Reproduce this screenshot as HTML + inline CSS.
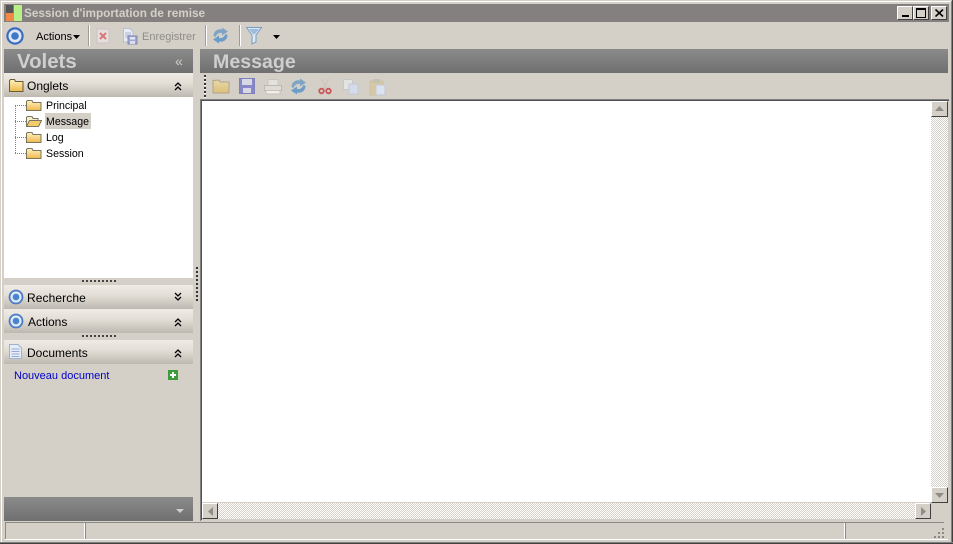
<!DOCTYPE html>
<html><head><meta charset="utf-8">
<style>
html,body{margin:0;padding:0;background:#d4d0c8}
#w{position:relative;width:953px;height:544px;overflow:hidden;background:#d4d0c8;font-family:"Liberation Sans",sans-serif;font-size:11px;color:#000}
#w div,#w svg{position:absolute}
#w span{position:absolute;white-space:nowrap}
.ic{filter:blur(.3px)}
.hd{background:linear-gradient(#8b8b8b,#6f6f6f)}
.sec{left:4px;width:189px;height:24px;background:linear-gradient(#efebe5 0,#e4e0d8 40%,#bdb9b0 100%)}
.sec span{font-size:12px;top:5px}
.btn{background:#d4d0c8;border:1px solid;border-color:#fff #404040 #404040 #fff;box-sizing:border-box}
.h1{font-weight:bold;font-size:20px;color:#cfcfcf}
.tr{font-size:10.6px}
</style></head><body>
<div id="w">
<svg width="0" height="0" style="left:0;top:0"><defs>
<linearGradient id="fo" x1="0" y1="0" x2="0" y2="1"><stop offset="0" stop-color="#fff4c0"/><stop offset="1" stop-color="#eeb84c"/></linearGradient>
<linearGradient id="fp" x1="0" y1="0" x2="0" y2="1"><stop offset="0" stop-color="#e8d8a8"/><stop offset="1" stop-color="#dcc07c"/></linearGradient>
</defs></svg>
<!-- window frame -->
<div style="left:0;top:0;width:953px;height:1px;background:#d4d0c8"></div>
<div style="left:1px;top:1px;width:951px;height:1px;background:#fff"></div>
<div style="left:1px;top:1px;width:1px;height:541px;background:#fff"></div>
<div style="left:951px;top:1px;width:1px;height:542px;background:#808080"></div>
<div style="left:952px;top:0;width:1px;height:544px;background:#404040"></div>
<div style="left:0;top:542px;width:953px;height:1px;background:#808080"></div>
<div style="left:0;top:543px;width:953px;height:1px;background:#404040"></div>

<!-- title bar -->
<div style="left:4px;top:4px;width:945px;height:18px;background:#84807f"></div>
<div style="left:6px;top:5px;width:7px;height:8px;background:#555"></div>
<div style="left:6px;top:13px;width:8px;height:8px;background:#f08848"></div>
<div style="left:14px;top:5px;width:8px;height:16px;background:#b8f088"></div>
<span style="left:24px;top:7px;font-weight:bold;font-size:11.75px;color:#d4d0c8">Session d'importation de remise</span>
<div class="btn" style="left:897px;top:6px;width:16px;height:14px"><div style="left:4px;top:8px;width:7px;height:2px;background:#000"></div></div>
<div class="btn" style="left:913px;top:6px;width:16px;height:14px"><div style="left:2px;top:1px;width:10px;height:10px;border:1px solid #000;border-top-width:2px;box-sizing:border-box"></div></div>
<div class="btn" style="left:931px;top:6px;width:16px;height:14px"><svg style="left:3px;top:2px" width="9" height="8"><path d="M0.5 0.5L8 7.5M8 .5L0.5 7.5" stroke="#000" stroke-width="1.6"/></svg></div>

<!-- main toolbar -->
<svg class="ic" style="left:6px;top:27px" width="18" height="18"><circle cx="9" cy="9" r="7.600" fill="#dfe8f5" stroke="#3c6cc0" stroke-width="2.200"/><circle cx="9" cy="9" r="3.800" fill="#3f78c8"/></svg>
<span style="left:36px;top:31px;font-size:11px">Actions</span>
<svg style="left:73px;top:35px" width="7" height="4"><path d="M0 0H7L3.5 4Z" fill="#000"/></svg>
<div style="left:88px;top:25px;width:1px;height:21px;background:#a09c94"></div><div style="left:89px;top:25px;width:1px;height:21px;background:#fff"></div>
<svg class="ic" style="left:96px;top:28px" width="14" height="16"><rect x="1" y="1" width="12" height="14" fill="#e8dede" stroke="#c8c4c4"/><path d="M4 5L10 11M10 5L4 11" stroke="#d87878" stroke-width="2"/></svg>
<svg class="ic" style="left:122px;top:28px" width="17" height="17"><path d="M1.500 .5H8L11 3.500V14H1.500Z" fill="#e8ecf4" stroke="#b8c0cc"/><path d="M3 5H9M3 7H9M3 9H6" stroke="#a8b8d0"/><rect x="6" y="8" width="9" height="8" fill="#a0a8d0" stroke="#8088b8"/><rect x="8" y="9" width="5" height="2.500" fill="#e4e4ec"/><rect x="8" y="13" width="5" height="3" fill="#dcdce8"/></svg>
<span style="left:142px;top:31px;font-size:11px;color:#8f8d88">Enregistrer</span>
<div style="left:205px;top:25px;width:1px;height:21px;background:#a09c94"></div><div style="left:206px;top:25px;width:1px;height:21px;background:#fff"></div>
<svg class="ic" style="left:212px;top:27px" width="17" height="17"><path d="M1.500 9C1.500 4 6 1.500 10 2.500L10 .5L16 4.500L10 8.500V6C7 5.500 5 6.500 3.500 10Z" fill="#7fa4c4"/><path d="M15.500 8C15.500 13 11 15.500 7 14.500V16.500L1 12.500L7 8.500V11C10 11.500 12 10.500 13.500 7Z" fill="#6c9cc8"/></svg>
<div style="left:239px;top:25px;width:1px;height:21px;background:#a09c94"></div><div style="left:240px;top:25px;width:1px;height:21px;background:#fff"></div>
<svg class="ic" style="left:246px;top:27px" width="17" height="18"><path d="M.5 .5H15.500L10 8V15L6 17V8Z" fill="#dce8f4" stroke="#7a9cc0"/><path d="M3 2H13L9 7H7Z" fill="#9cbcdc"/></svg>
<svg style="left:273px;top:35px" width="7" height="4"><path d="M0 0H7L3.500 4Z" fill="#000"/></svg>

<!-- Volets header -->
<div class="hd" style="left:4px;top:49px;width:189px;height:24px"></div>
<span class="h1" style="left:17px;top:51px;font-size:20.4px">Volets</span>
<span style="left:175px;top:53px;font-size:14px;color:#d4d0c8">«</span>

<!-- Onglets -->
<div class="sec" style="top:73px"><span style="left:23px;top:6px">Onglets</span>
<svg class="ic" style="left:5px;top:5px" width="15" height="14"><path d="M.5 2.500V13.500H14V3.500H6.500L5.500 1.500H1.500Z" fill="url(#fo)" stroke="#6a5a38"/></svg>
<svg style="left:170px;top:9px" width="8" height="9"><path d="M1 4L4 1L7 4M1 8L4 5L7 8" fill="none" stroke="#000" stroke-width="1.300"/></svg>
</div>

<!-- tree -->
<div style="left:4px;top:97px;width:189px;height:181px;background:#fff"></div>
<div style="left:15px;top:105px;width:0;height:48px;border-left:1px dotted #808080"></div>
<div style="left:15px;top:105px;width:11px;height:0;border-top:1px dotted #808080"></div>
<div style="left:15px;top:121px;width:11px;height:0;border-top:1px dotted #808080"></div>
<div style="left:15px;top:137px;width:11px;height:0;border-top:1px dotted #808080"></div>
<div style="left:15px;top:153px;width:11px;height:0;border-top:1px dotted #808080"></div>
<svg class="ic" style="left:26px;top:99px" width="16" height="13"><path d="M.5 2.500V11.500H15V3.500H7L6 1.500H1.500Z" fill="url(#fo)" stroke="#7a7460"/></svg>
<svg class="ic" style="left:26px;top:115px" width="16" height="13"><path d="M.5 11.500V2.500L1.500 1.500H6L7 3.500H12V5.500" fill="#f8f0c8" stroke="#7a7460"/><path d="M.5 11.500L3.500 5.500H15.500L12.500 11.500Z" fill="#f4cc68" stroke="#7a7460"/></svg>
<svg class="ic" style="left:26px;top:131px" width="16" height="13"><path d="M.5 2.500V11.500H15V3.500H7L6 1.500H1.500Z" fill="url(#fo)" stroke="#7a7460"/></svg>
<svg class="ic" style="left:26px;top:147px" width="16" height="13"><path d="M.5 2.500V11.500H15V3.500H7L6 1.500H1.500Z" fill="url(#fo)" stroke="#7a7460"/></svg>
<span class="tr" style="left:46px;top:100px">Principal</span>
<div style="left:45px;top:113px;width:46px;height:16px;background:#d4d0c8"></div>
<span class="tr" style="left:46px;top:116px">Message</span>
<span class="tr" style="left:46px;top:132px">Log</span>
<span class="tr" style="left:46px;top:148px">Session</span>

<!-- grips -->
<div style="left:82px;top:280px;width:34px;height:2px;background:repeating-linear-gradient(90deg,#444 0 2px,transparent 2px 4px)"></div>
<div style="left:82px;top:335px;width:34px;height:2px;background:repeating-linear-gradient(90deg,#444 0 2px,transparent 2px 4px)"></div>
<div style="left:196px;top:267px;width:2px;height:36px;background:repeating-linear-gradient(180deg,#333 0 2px,transparent 2px 4px)"></div>

<!-- Recherche -->
<div class="sec" style="top:285px"><span style="left:23px;top:6px;letter-spacing:.1px">Recherche</span>
<svg class="ic" style="left:4px;top:4px" width="16" height="16"><circle cx="8" cy="8" r="6.500" fill="#dfe8f5" stroke="#4a7cc4" stroke-width="1.800"/><circle cx="8" cy="8" r="3.300" fill="#4a84d0"/></svg>
<svg style="left:170px;top:7px" width="8" height="9"><path d="M1 1L4 4L7 1M1 5L4 8L7 5" fill="none" stroke="#000" stroke-width="1.300"/></svg>
</div>
<!-- Actions -->
<div class="sec" style="top:309px"><span style="left:24px;top:6px">Actions</span>
<svg class="ic" style="left:4px;top:4px" width="16" height="16"><circle cx="8" cy="8" r="6.500" fill="#dfe8f5" stroke="#4a7cc4" stroke-width="1.800"/><circle cx="8" cy="8" r="3.300" fill="#4a84d0"/></svg>
<svg style="left:170px;top:9px" width="8" height="9"><path d="M1 4L4 1L7 4M1 8L4 5L7 8" fill="none" stroke="#000" stroke-width="1.300"/></svg>
</div>
<!-- Documents -->
<div class="sec" style="top:340px"><span style="left:23px;top:6px">Documents</span>
<svg class="ic" style="left:5px;top:4px" width="13" height="15"><path d="M.5 .5H9L12.500 4V14.500H.5Z" fill="#e8eef8" stroke="#a0b0d0"/><path d="M2.500 5H10.500M2.500 7.500H10.500M2.500 10H10.500M2.500 12.500H10.500" stroke="#90a8d8"/></svg>
<svg style="left:170px;top:9px" width="8" height="9"><path d="M1 4L4 1L7 4M1 8L4 5L7 8" fill="none" stroke="#000" stroke-width="1.300"/></svg>
</div>
<span style="left:14px;top:370px;color:#0000c8">Nouveau document</span>
<svg style="left:168px;top:370px" width="10" height="10"><rect width="10" height="10" fill="#3c9c3c"/><path d="M5 2V8M2 5H8" stroke="#fff" stroke-width="2"/></svg>

<!-- bottom bar -->
<div class="hd" style="left:4px;top:497px;width:189px;height:24px"></div>
<svg style="left:176px;top:509px" width="8" height="4"><path d="M0 0H8L4 4Z" fill="#cfcfcf"/></svg>

<!-- Message header -->
<div class="hd" style="left:200px;top:49px;width:748px;height:24px"></div>
<span class="h1" style="left:213px;top:51px;font-size:19.6px">Message</span>

<!-- message toolbar -->
<div style="left:204px;top:75px;width:2px;height:23px;background:repeating-linear-gradient(180deg,#333 0 2px,#fff 2px 3px,transparent 3px 4px)"></div>
<svg class="ic" style="left:212px;top:78px" width="18" height="16"><path d="M1 2.500V15H17V4H8L7 2Z" fill="url(#fp)" stroke="#b0a488"/></svg>
<svg class="ic" style="left:239px;top:78px" width="16" height="16"><rect x=".5" y=".5" width="15" height="15" fill="#8888c8" stroke="#8080b8"/><rect x="3" y="1" width="10" height="6" fill="#d8d8e4"/><rect x="4" y="10" width="8" height="5" fill="#d8d8e4"/></svg>
<svg class="ic" style="left:264px;top:79px" width="18" height="16"><rect x="4" y=".5" width="10" height="6" fill="#e4e2dc" stroke="#c8c6be"/><rect x=".5" y="6.500" width="17" height="5" fill="#dedcd4" stroke="#bcbab2"/><rect x="2" y="11.500" width="14" height="3.500" fill="#f0eee8" stroke="#c4c2ba"/></svg>
<svg class="ic" style="left:290px;top:78px" width="17" height="17"><path d="M1.500 9C1.500 4 6 1.500 10 2.500L10 .5L16 4.500L10 8.500V6C7 5.500 5 6.500 3.500 10Z" fill="#7fa4c4"/><path d="M15.500 8C15.500 13 11 15.500 7 14.500V16.500L1 12.500L7 8.500V11C10 11.500 12 10.500 13.500 7Z" fill="#6c9cc8"/></svg>
<svg class="ic" style="left:318px;top:78px" width="14" height="17"><path d="M3.500 1L8.500 11M10.500 1L5.500 11" stroke="#c8c4bc" stroke-width="1.200"/><circle cx="3.500" cy="13" r="2.300" fill="none" stroke="#c85858" stroke-width="1.800"/><circle cx="10.500" cy="13" r="2.300" fill="none" stroke="#c85858" stroke-width="1.800"/></svg>
<svg class="ic" style="left:343px;top:79px" width="16" height="16"><rect x=".5" y=".5" width="9" height="10" fill="#e4e4e4" stroke="#c8c8c8"/><rect x="6" y="5" width="9" height="10" fill="#d4dcec" stroke="#c4c8d4"/></svg>
<svg class="ic" style="left:369px;top:78px" width="17" height="18"><rect x="1" y="3" width="13" height="14" fill="#d8c8a0" stroke="#c8c0a8"/><rect x="4" y="1" width="7" height="4" fill="#c4c0b4"/><rect x="7" y="7" width="9" height="10" fill="#dce2f0" stroke="#c4c8d4"/></svg>

<!-- edit area -->
<div style="left:200px;top:99px;width:749px;height:1px;background:#808080"></div>
<div style="left:200px;top:99px;width:1px;height:422px;background:#808080"></div>
<div style="left:201px;top:100px;width:748px;height:1px;background:#505050"></div>
<div style="left:201px;top:100px;width:1px;height:420px;background:#505050"></div>
<div style="left:202px;top:101px;width:729px;height:401px;background:#fff"></div>
<!-- scrollbars -->
<div style="left:931px;top:101px;width:17px;height:417px;background:repeating-conic-gradient(#fff 0 25%,#d4d0c8 0 50%) 0 0/2px 2px"></div>
<div style="left:202px;top:503px;width:729px;height:16px;background:repeating-conic-gradient(#fff 0 25%,#d4d0c8 0 50%) 0 0/2px 2px"></div>
<div class="btn" style="left:931px;top:101px;width:17px;height:16px"><svg style="left:3px;top:4px" width="9" height="5"><path d="M0 5H9L4.500 0Z" fill="#8f8d88"/></svg></div>
<div class="btn" style="left:931px;top:487px;width:17px;height:16px"><svg style="left:3px;top:5px" width="9" height="5"><path d="M0 0H9L4.500 5Z" fill="#8f8d88"/></svg></div>
<div class="btn" style="left:202px;top:503px;width:16px;height:16px"><svg style="left:5px;top:3px" width="5" height="9"><path d="M5 0V9L0 4.500Z" fill="#8f8d88"/></svg></div>
<div class="btn" style="left:915px;top:503px;width:16px;height:16px"><svg style="left:5px;top:3px" width="5" height="9"><path d="M0 0V9L5 4.500Z" fill="#8f8d88"/></svg></div>
<div style="left:931px;top:503px;width:17px;height:18px;background:#d4d0c8"></div>

<!-- status bar -->
<div style="left:5px;top:522px;width:939px;height:1px;background:#8c8a84"></div>
<div style="left:5px;top:522px;width:1px;height:18px;background:#8c8a84"></div>
<div style="left:5px;top:539px;width:943px;height:1px;background:#fff"></div>
<div style="left:84px;top:523px;width:1px;height:16px;background:#fff"></div>
<div style="left:85px;top:522px;width:1px;height:17px;background:#8c8a84"></div>
<div style="left:844px;top:523px;width:1px;height:16px;background:#fff"></div>
<div style="left:845px;top:522px;width:1px;height:17px;background:#8c8a84"></div>
<svg style="left:934px;top:528px" width="12" height="11"><path d="M8 0h2v2H8zM4 4h2v2H4zM8 4h2v2H8zM0 8h2v2H0zM4 8h2v2H4zM8 8h2v2H8z" fill="#8c8a84"/></svg>
</div>
</body></html>
